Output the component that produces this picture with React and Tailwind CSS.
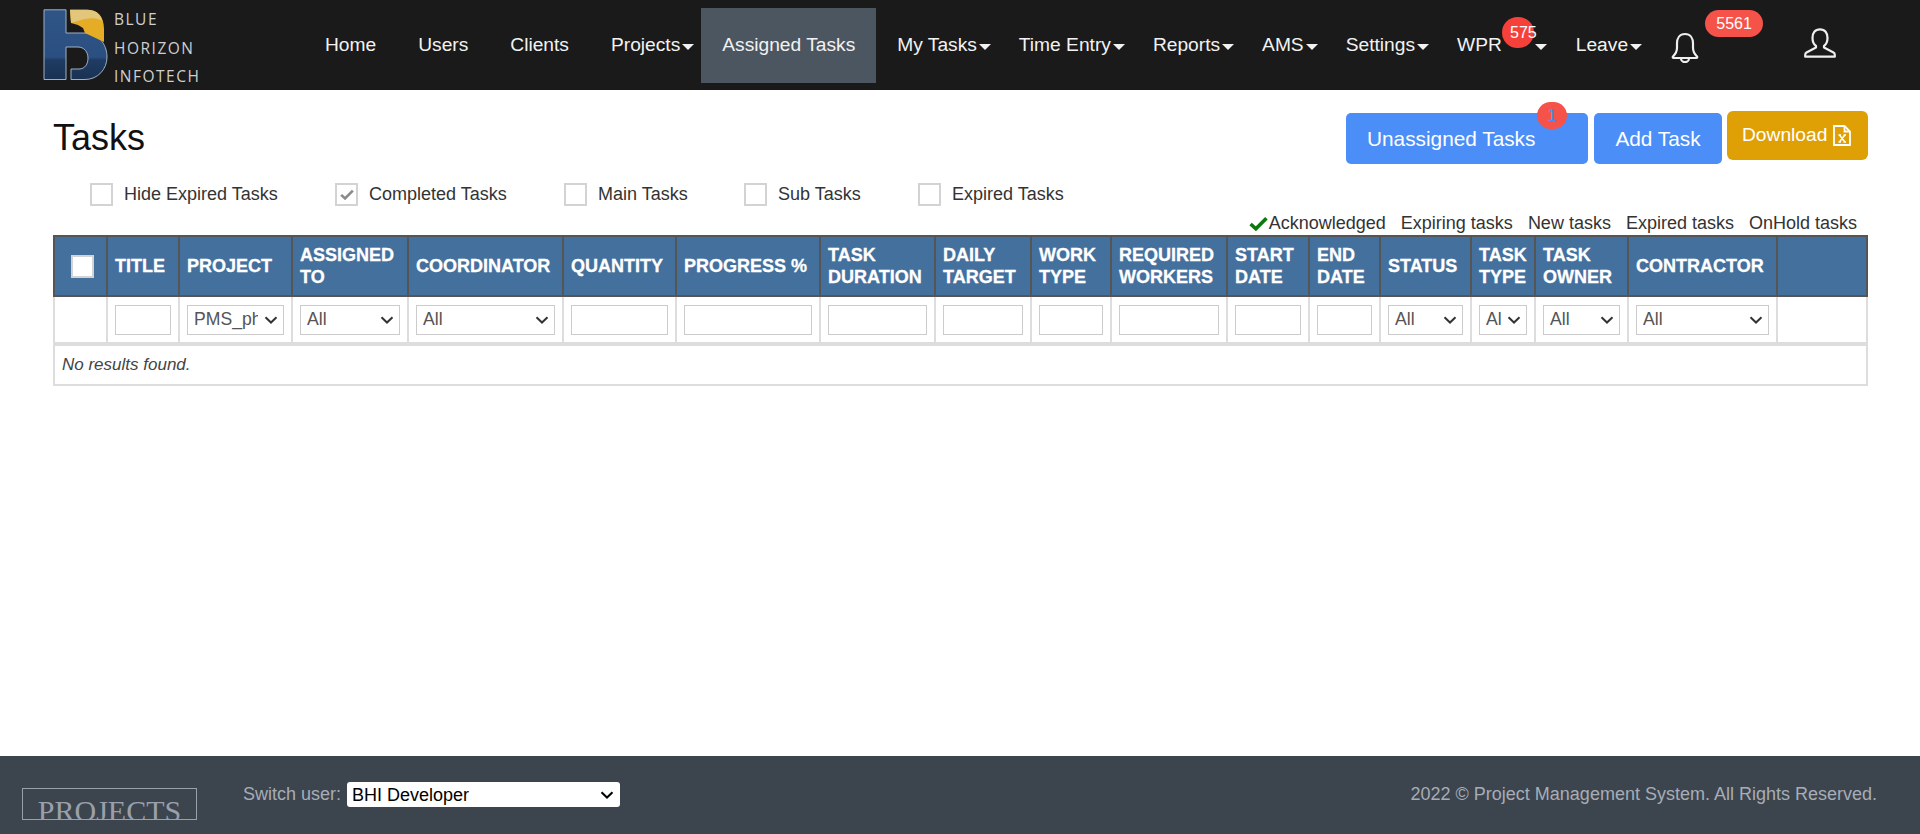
const navItems = [
  { label: "Home" },
  { label: "Users" },
  { label: "Clients" },
  { label: "Projects", caret: true },
  { label: "Assigned Tasks", active: true },
  { label: "My Tasks", caret: true },
  { label: "Time Entry", caret: true },
  { label: "Reports", caret: true },
  { label: "AMS", caret: true },
  { label: "Settings", caret: true },
];

const filters = [
  { label: "Hide Expired Tasks", className: "w-[245px]" },
  { label: "Completed Tasks", checked: true, className: "w-[229px]" },
  { label: "Main Tasks", className: "w-[180px]" },
  { label: "Sub Tasks", className: "w-[174px]" },
  { label: "Expired Tasks", className: "" },
];

const columns = [
  { width: "w-[53px]", filter: "none", checkbox: true },
  { label: "TITLE", width: "w-[72px]", filter: "input" },
  { label: "PROJECT", width: "w-[113px]", filter: "select", value: "PMS_phase" },
  { label: "ASSIGNED TO", width: "w-[116px]", filter: "select", value: "All" },
  { label: "COORDINATOR", width: "w-[155px]", filter: "select", value: "All" },
  { label: "QUANTITY", width: "w-[113px]", filter: "input" },
  { label: "PROGRESS %", width: "w-[144px]", filter: "input" },
  { label: "TASK DURATION", width: "w-[115px]", filter: "input" },
  { label: "DAILY TARGET", width: "w-[96px]", filter: "input" },
  { label: "WORK TYPE", width: "w-[80px]", filter: "input" },
  { label: "REQUIRED WORKERS", width: "w-[116px]", filter: "input" },
  { label: "START DATE", width: "w-[82px]", filter: "input" },
  { label: "END DATE", width: "w-[71px]", filter: "input" },
  { label: "STATUS", width: "w-[91px]", filter: "select", value: "All" },
  { label: "TASK TYPE", width: "w-[64px]", filter: "select", value: "All" },
  { label: "TASK OWNER", width: "w-[93px]", filter: "select", value: "All" },
  { label: "CONTRACTOR", width: "w-[149px]", filter: "select", value: "All" },
  { width: "w-[90px]", filter: "none" },
];

function Caret() {
  return <span className="ml-[2px] mt-[3px] inline-block border-x-[6px] border-t-[6px] border-x-transparent border-t-[#f2f2f2]" />;
}

function Chevron({ className }) {
  return (
    <svg viewBox="0 0 14 8" className={`pointer-events-none absolute top-1/2 h-[8px] w-[14px] -translate-y-1/2 ${className}`}>
      <path d="M1.5 1.2L7 6.5L12.5 1.2" fill="none" stroke="currentColor" strokeWidth="2" />
    </svg>
  );
}

function Logo() {
  return (
    <svg viewBox="0 0 66 72" className="h-[72px] w-[66px] shrink-0">
      <defs>
        <linearGradient id="blueFill" x1="0" y1="0" x2="0" y2="1">
          <stop offset="0" stopColor="#2f5486" />
          <stop offset="0.68" stopColor="#2a4f80" />
          <stop offset="0.72" stopColor="#1f3c63" />
          <stop offset="1" stopColor="#1a3252" />
        </linearGradient>
      </defs>
      <path
        d="M1 0.8H23V24H42C55 24 64 35 64 48C64 60 55 70.5 42 70.5H28V60H36C42 60 45 55 45 49C45 43 41 38 35 38H23V70.5H1Z"
        fill="url(#blueFill)"
        stroke="#9fb0c4"
        strokeWidth="1"
      />
      <path d="M27 0.8H44C55 0.8 61 8 61 20V33L42 24L40 19L35 16L28 14Z" fill="#e5ac25" />
      <path d="M27 0.8H44C52 0.8 57 4 59.5 12C52 8 44 9 35 12L28 14Z" fill="#e2c67c" />
    </svg>
  );
}

function BellIcon() {
  return (
    <svg viewBox="0 0 28 31" className="h-[31px] w-[28px]" fill="none" stroke="#eeeeee" strokeWidth="2.2" strokeLinejoin="round">
      <path d="M14 2C8.5 2 6 6.5 6 11.5V16C6 20 4 22.5 2 24.5C1.4 25.2 1.8 26 2.6 26H25.4C26.2 26 26.6 25.2 26 24.5C24 22.5 22 20 22 16V11.5C22 6.5 19.5 2 14 2Z" />
      <path d="M10 26.5A4 3.6 0 0 0 18 26.5" />
    </svg>
  );
}

function UserIcon() {
  return (
    <svg viewBox="0 0 32 30" className="h-[30px] w-[32px]" fill="none" stroke="#eeeeee" strokeWidth="2.2" strokeLinejoin="round">
      <path d="M16 1.3C11 1.3 8.5 5 8.5 10C8.5 13.5 10 16.5 12 18V19.5L2.5 24.5C1.5 25 1.2 26 1.2 27V28.7H30.8V27C30.8 26 30.5 25 29.5 24.5L20 19.5V18C22 16.5 23.5 13.5 23.5 10C23.5 5 21 1.3 16 1.3Z" />
    </svg>
  );
}

function ExcelIcon() {
  return (
    <svg viewBox="0 0 18 21" className="h-[21px] w-[18px] shrink-0" fill="none" stroke="white" strokeWidth="1.8">
      <path d="M1 1H11.5L17 6.5V20H1Z" />
      <path d="M11.5 1V6.5H17" />
      <path d="M5.5 10H8M10.5 10H13M5.5 17H8M10.5 17H13M6.5 10L11.8 17M11.8 10L6.5 17" strokeWidth="1.5" />
    </svg>
  );
}

function CheckIcon({ className }) {
  return (
    <svg viewBox="0 0 18 14" className={className}>
      <path d="M1.5 7.5L6.5 12L16.5 2" fill="none" stroke="currentColor" strokeWidth="3.4" />
    </svg>
  );
}

function Header() {
  return (
    <header className="flex h-[90px] items-start bg-[#1a1a1a] text-[19.2px] text-[#f2f2f2]">
      <div className="ml-[43px] mt-[9px] flex w-[261px] shrink-0 gap-[5px]">
        <Logo />
        <div className="-mt-[4px] flex flex-col font-['Open_Sans',sans-serif] text-[15.5px] leading-[28.5px] tracking-[1.5px] text-[#cfcfcf]">
          <span>BLUE</span>
          <span>HORIZON</span>
          <span>INFOTECH</span>
        </div>
      </div>
      <nav className="mt-[8px] flex items-center">
        {navItems.map((item) => (
          <a
            key={item.label}
            className={`flex h-[75px] items-center pl-[21px] ${item.caret ? "pr-[7px]" : "pr-[21px]"} ${item.active ? "bg-[#4b5661]" : ""}`}
          >
            {item.label}
            {item.caret && <Caret />}
          </a>
        ))}
        <a className="relative flex h-[75px] items-center pl-[21px] pr-[8px]">
          WPR
          <span className="absolute left-[66px] top-[9px] flex h-[31px] w-[32px] items-center rounded-full bg-[#f5413a] pl-[8px] text-[16px] text-white">
            575
          </span>
          <span className="ml-[31px] flex">
            <Caret />
          </span>
        </a>
        <a className="flex h-[75px] items-center pl-[21px] pr-[6px]">
          Leave
          <Caret />
        </a>
        <a className="relative ml-[23px] flex h-[75px] w-[133px] items-center pt-[3px]">
          <BellIcon />
          <span className="absolute left-[34px] top-[2px] flex h-[27px] w-[58px] items-center justify-center rounded-full bg-[#f5534a] text-[16px] text-white">
            5561
          </span>
        </a>
        <a className="-mt-[5px] flex h-[75px] items-center">
          <UserIcon />
        </a>
      </nav>
    </header>
  );
}

function Checkbox({ checked }) {
  return (
    <span className="flex size-[23px] items-center justify-center border-2 border-[#d3d3d3] bg-white text-[#8a8a8a]">
      {checked && <CheckIcon className="h-[11px] w-[14px]" />}
    </span>
  );
}

function HeaderCell({ column }) {
  return (
    <th className="border-2 border-[#555] bg-[#44709d] px-[7px] py-0 text-left align-middle text-[18px] font-bold leading-[22px] text-white [-webkit-text-stroke:0.3px_white]">
      {column.label}
      {column.checkbox && <span className="ml-[9px] block size-[23px] border-2 border-[#d3d3d3] bg-white" />}
    </th>
  );
}

function FilterCell({ column }) {
  const boxClass = "block h-[30px] w-full border border-[#ccc] bg-white text-[17.6px] text-[#555]";
  return (
    <td className="border-x-2 border-b-4 border-[#ddd] px-[7px] py-0 align-middle">
      {column.filter === "input" && <input className={boxClass} />}
      {column.filter === "select" && (
        <div className="relative">
          <select className={`${boxClass} appearance-none pl-[6px] pr-[25px]`} defaultValue={column.value}>
            <option>{column.value}</option>
          </select>
          <Chevron className="right-[6px] text-[#333]" />
        </div>
      )}
    </td>
  );
}

function TaskTable() {
  return (
    <table className="w-[1814px] table-fixed border-collapse">
      <colgroup>
        {columns.map((column, index) => (
          <col key={index} className={column.width} />
        ))}
      </colgroup>
      <thead>
        <tr className="h-[60px]">
          {columns.map((column, index) => (
            <HeaderCell key={index} column={column} />
          ))}
        </tr>
        <tr className="h-[48px]">
          {columns.map((column, index) => (
            <FilterCell key={index} column={column} />
          ))}
        </tr>
      </thead>
      <tbody>
        <tr className="h-[41px]">
          <td colSpan={columns.length} className="border-2 border-[#ddd] px-[7px] text-[17px] italic text-[#444]">
            No results found.
          </td>
        </tr>
      </tbody>
    </table>
  );
}

export default function App() {
  return (
    <div className="flex min-h-screen flex-col bg-white font-['Liberation_Sans',sans-serif] text-[#333]">
      <Header />
      <main className="flex-1 px-[53px]">
        <div className="flex items-start justify-between">
          <h1 className="mt-[27px] text-[36px] leading-[42px] text-[#111]">Tasks</h1>
          <div className="-mr-[1px] mt-[21px] flex items-start">
            <button className="relative mt-[2px] flex h-[51px] w-[242px] items-center rounded-[5px] bg-[#4b8ef7] pl-[21px] text-[20.8px] text-white">
              Unassigned Tasks
              <span className="absolute left-[191px] top-[-11px] flex h-[27px] w-[30px] items-center justify-center rounded-full bg-[#f5534a] text-[16px] text-[#4b8ef7]">
                1
              </span>
            </button>
            <button className="ml-[6px] mt-[2px] h-[51px] w-[128px] rounded-[5px] bg-[#4b8ef7] text-[20.8px] text-white">
              Add Task
            </button>
            <button className="ml-[5px] flex h-[49px] w-[141px] items-center gap-[6px] rounded-[6px] bg-[#dfa006] pl-[15px] text-[19.2px] text-white">
              Download
              <ExcelIcon />
            </button>
          </div>
        </div>
        <div className="ml-[37px] mt-[17px] flex text-[18px]">
          {filters.map((filter) => (
            <label key={filter.label} className={`flex items-center gap-[11px] ${filter.className}`}>
              <Checkbox checked={filter.checked} />
              {filter.label}
            </label>
          ))}
        </div>
        <div className="mr-[10px] mt-[5px] flex h-[20px] items-center justify-end gap-[15px] text-[18px]">
          <span className="flex items-center">
            <CheckIcon className="mr-[1px] h-[15px] w-[19px] text-[#0a7a0a]" />
            Acknowledged
          </span>
          <span>Expiring tasks</span>
          <span>New tasks</span>
          <span>Expired tasks</span>
          <span>OnHold tasks</span>
        </div>
        <div className="mt-[2px]">
          <TaskTable />
        </div>
      </main>
      <footer className="flex h-[78px] items-start bg-[#3c444e] text-[18px] text-[#a7adb5]">
        <div className="ml-[22px] mt-[32px] h-[32px] w-[175px] overflow-hidden border border-[#9aa0ab] text-center font-['Liberation_Serif',serif] text-[30px] leading-[44px] text-[#9aa0ab]">
          PROJECTS
        </div>
        <div className="ml-[46px] mt-[25px] flex items-center gap-[6px]">
          <span>Switch user:</span>
          <div className="relative">
            <select className="block h-[25px] w-[273px] appearance-none rounded-[3px] bg-white pl-[5px] text-[18px] text-black">
              <option>BHI Developer</option>
            </select>
            <Chevron className="right-[6px] text-black" />
          </div>
        </div>
        <div className="ml-auto mr-[43px] mt-[25px]">2022 © Project Management System. All Rights Reserved.</div>
      </footer>
    </div>
  );
}
